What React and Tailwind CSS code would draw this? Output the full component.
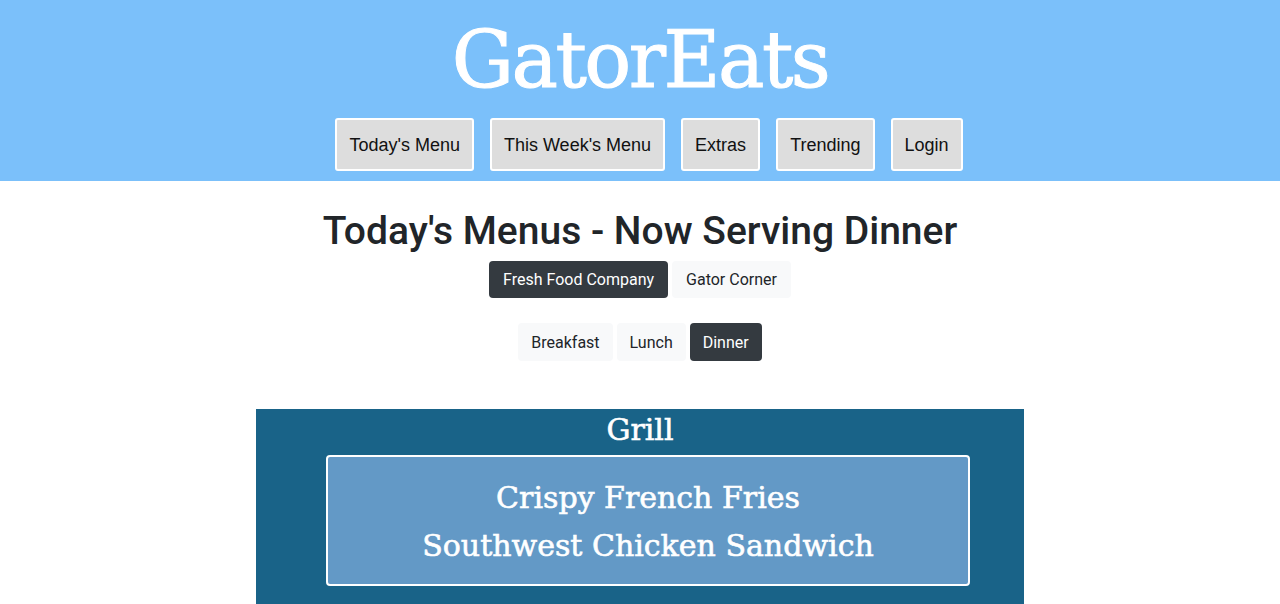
import React from "react";

const navItems = ["Today's Menu", "This Week's Menu", "Extras", "Trending", "Login"];
const halls = [
  { name: "Fresh Food Company", active: true },
  { name: "Gator Corner", active: false },
];
const meals = [
  { name: "Breakfast", active: false },
  { name: "Lunch", active: false },
  { name: "Dinner", active: true },
];
const grillItems = ["Crispy French Fries", "Southwest Chicken Sandwich"];

const slab = { fontFamily: '"DejaVu Serif", "Liberation Serif", serif' };

const Header = () => (
  <header className="bg-[#7bc0fa] pt-[21px] pb-[10px] flex flex-col items-center">
    <h1
      className="text-white text-[78px] leading-none tracking-[-2.5px] font-normal [-webkit-text-stroke:1px_white]"
      style={slab}
    >
      GatorEats
    </h1>
    <nav className="mt-[19px] ml-[18px] flex gap-4 font-['Liberation_Sans',Arial,sans-serif]">
      {navItems.map((item) => (
        <button
          key={item}
          className="bg-[#dddddd] border-2 border-white rounded-[3px] px-3 pt-[15px] pb-[13px] text-[18px] leading-[21px] text-[#111]"
        >
          {item}
        </button>
      ))}
    </nav>
  </header>
);

const ToggleGroup = ({ items, className, pad }) => (
  <div className={`flex justify-center gap-1 ${className}`}>
    {items.map((it) => (
      <button
        key={it.name}
        className={`rounded-[4px] pt-px text-[16px] ${pad} ${
          it.active ? "bg-[#343a40] text-white" : "bg-[#f8f9fa] text-[#212529]"
        }`}
      >
        {it.name}
      </button>
    ))}
  </div>
);

const StationCard = ({ title, items }) => (
  <section className="w-[768px] mx-auto bg-[#196388] pt-[3px] pb-6">
    <h2
      className="text-white text-center text-[30px] leading-[36px] [-webkit-text-stroke:0.6px_white]"
      style={slab}
    >
      {title}
    </h2>
    <div className="mt-[7px] ml-[70px] w-[644px] bg-[#6399c6] border-2 border-white rounded-[4px] pt-[17px] pb-[14px]">
      {items.map((item) => (
        <p
          key={item}
          className="text-white text-center text-[30px] leading-[48px] [-webkit-text-stroke:0.6px_white]"
          style={slab}
        >
          {item}
        </p>
      ))}
    </div>
  </section>
);

export default function App() {
  return (
    <div className="min-h-screen bg-white font-['Roboto','Liberation_Sans',sans-serif]">
      <Header />
      <main className="flex flex-col items-center">
        <h1 className="mt-[26px] text-[39px] leading-[48px] font-medium text-[#212529]">
          Today's Menus - Now Serving Dinner
        </h1>
        <ToggleGroup items={halls} pad="px-[14px]" className="mt-[6px] h-[37px]" />
        <ToggleGroup items={meals} pad="px-[13px]" className="mt-[25px] h-[38px]" />
        <div className="mt-[48px] w-full">
          <StationCard title="Grill" items={grillItems} />
        </div>
      </main>
    </div>
  );
}
